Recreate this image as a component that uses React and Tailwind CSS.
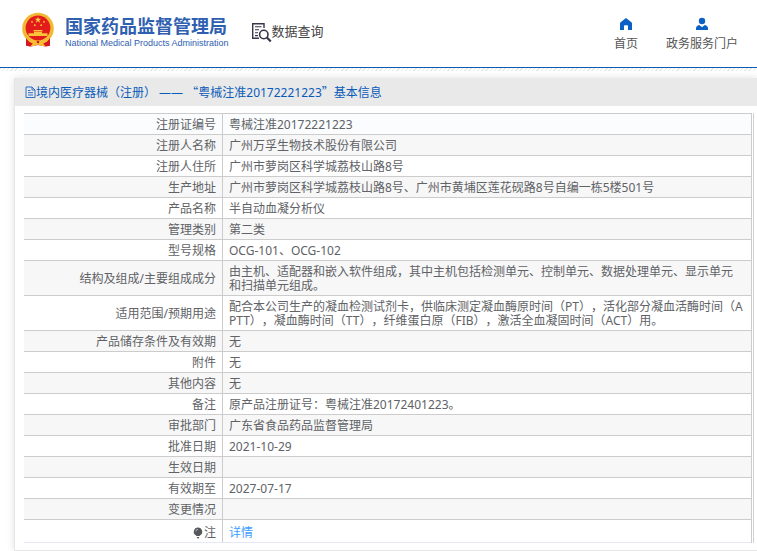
import React from "react";

const rows = [
  ["注册证编号", "粤械注准20172221223"],
  ["注册人名称", "广州万孚生物技术股份有限公司"],
  ["注册人住所", "广州市萝岗区科学城荔枝山路8号"],
  ["生产地址", "广州市萝岗区科学城荔枝山路8号、广州市黄埔区莲花砚路8号自编一栋5楼501号"],
  ["产品名称", "半自动血凝分析仪"],
  ["管理类别", "第二类"],
  ["型号规格", "OCG-101、OCG-102"],
  ["结构及组成/主要组成成分", "由主机、适配器和嵌入软件组成，其中主机包括检测单元、控制单元、数据处理单元、显示单元和扫描单元组成。"],
  ["适用范围/预期用途", "配合本公司生产的凝血检测试剂卡，供临床测定凝血酶原时间（PT），活化部分凝血活酶时间（APTT），凝血酶时间（TT），纤维蛋白原（FIB），激活全血凝固时间（ACT）用。"],
  ["产品储存条件及有效期", "无"],
  ["附件", "无"],
  ["其他内容", "无"],
  ["备注", "原产品注册证号：粤械注准20172401223。"],
  ["审批部门", "广东省食品药品监督管理局"],
  ["批准日期", "2021-10-29"],
  ["生效日期", ""],
  ["有效期至", "2027-07-17"],
  ["变更情况", ""],
];

function Emblem() {
  return (
    <svg viewBox="0 0 32 36" className="h-9 w-8 shrink-0" aria-hidden="true">
      <path d="M4.500 24 4 33.500 9 34.500 16 33 23 34.500 28 33.500 27.500 24Z" fill="#d9161c" />
      <circle cx="16" cy="16.500" r="15.800" fill="#f4bd35" />
      <circle cx="16" cy="16.500" r="14.400" fill="none" stroke="#e8a82a" strokeWidth="0.700" strokeDasharray="1.500 1" />
      <circle cx="16" cy="16" r="12.400" fill="#e21b1b" />
      <path d="m16 4.500.8 2.300h2.500l-2 1.500.8 2.400-2.100-1.500-2.100 1.500.8-2.400-2-1.500h2.500z" fill="#f8cf3e" />
      <g fill="#f8cf3e">
        <circle cx="10" cy="9.800" r="0.900" />
        <circle cx="22" cy="9.800" r="0.900" />
        <circle cx="12.800" cy="13.200" r="0.900" />
        <circle cx="19.200" cy="13.200" r="0.900" />
      </g>
      <path d="M12 18h8l1 1.300h-10zM12 19.800h8v1.500h5.500V24h-19v-2.700H12z" fill="#f8c53a" />
      <path d="M5 25.500c2 2.500 4.500 2.500 7 3.500l1 1.500a3.200 3.200 0 0 1 6 0L20 29c2.500-1 5-1 7-3.500V28c-2 1.800-4.200 2-6 3.500l2.500 2.500H20l-4-1.500-4 1.500H8.500l2.500-2.500C9.200 30 7 29.800 5 28z" fill="#f6bd35" />
      <path d="M4 26v7.500l4 1 2-3-3-1.500zM28 26v7.500l-4 1-2-3 3-1.500z" fill="#d9161c" />
      <circle cx="16" cy="30" r="1.300" fill="#d9161c" />
    </svg>
  );
}

function SearchDocIcon() {
  return (
    <svg viewBox="0 0 21 21" className="h-[21px] w-[21px] shrink-0" fill="none" stroke="#39364a" aria-hidden="true">
      <path d="M13 6V1.700H1.700v14.600H8" strokeWidth="1.400" />
      <path d="M4 4.800h6.500M4 7.800h4M4 10.800h3M4 13.600h3" strokeWidth="1.100" />
      <circle cx="12.800" cy="12.500" r="4.200" strokeWidth="1.600" />
      <path d="m15.900 15.600 3.900 4" strokeWidth="2.200" />
    </svg>
  );
}

function HomeIcon() {
  return (
    <svg viewBox="0 0 14 14" className="h-3.5 w-3.5" fill="#0a60c4" aria-hidden="true">
      <path d="M7 1 1.600 5.300Q1 5.800 1 6.500V13h4V9q0-.7.700-.7h2.600Q9 8.300 9 9v4h4V6.500q0-.7-.6-1.200z" />
    </svg>
  );
}

function UserIcon() {
  return (
    <svg viewBox="0 0 14 14" className="h-3.5 w-3.5" fill="#0a60c4" aria-hidden="true">
      <circle cx="7" cy="4" r="3.200" />
      <path d="M1 13v-1.500Q1 8.800 4.300 8L7 10.300 9.700 8Q13 8.800 13 11.500V13z" />
    </svg>
  );
}

function NavLink({ icon, children }) {
  return (
    <a href="#" className="flex flex-col items-center gap-1 text-[12px] leading-[18px] text-[#555]">
      {icon}
      {children}
    </a>
  );
}

// Curly quotes take a full character width in the Chinese family.
function Quote({ children }) {
  return <span className="font-['Noto_Sans_CJK_SC',sans-serif]">{children}</span>;
}

export default function App() {
  return (
    <div
      lang="zh-CN"
      className="overflow-x-hidden bg-white font-['Noto_Sans','Noto_Sans_CJK_SC',sans-serif] text-[12px] leading-[14px] text-[#606266] [text-spacing-trim:space-all]"
    >
      <header className="flex h-[67px] items-start pr-[19px] pl-[22px]">
        <a href="#" className="mt-3 flex items-start gap-[11px] text-[#2f60b0]">
          <Emblem />
          <span className="flex flex-col whitespace-nowrap pt-[3px]">
            <span className="text-[18px] leading-[22px] font-bold">国家药品监督管理局</span>
            <span className="font-['Liberation_Sans',sans-serif] text-[9px] leading-[12px]">National Medical Products Administration</span>
          </span>
        </a>
        <a href="#" className="mt-[22px] ml-[22px] flex items-start whitespace-nowrap text-[13px] leading-[18px] text-[#444]">
          <SearchDocIcon />
          数据查询
        </a>
        <nav className="mt-[17px] ml-auto flex gap-7 whitespace-nowrap">
          <NavLink icon={<HomeIcon />}>首页</NavLink>
          <NavLink icon={<UserIcon />}>政务服务门户</NavLink>
        </nav>
      </header>
      <div className="h-1 border-t border-[#0b5cb0] bg-[repeating-linear-gradient(135deg,#e8e8e8_0_1px,#fff_1px_3px)]" />

      <main className="mt-[7px] ml-3.5 border-b border-l border-[#e6e6e6] shadow-[0_0_8px_rgba(0,0,0,0.12)]">
        <h1 className="flex h-7 items-center bg-[#e9e9e9] pl-2.5 whitespace-pre text-[#0a5bb8]">
          <svg viewBox="0 0 11 12" className="h-3 w-[11px] shrink-0" fill="none" stroke="#2d70c4" aria-hidden="true">
            <path d="M1 1h6l3 3v7.500H1zM7 1v3h3M3 4.500h2.500M3 6.700h5M3 9h5" />
          </svg>
          <span>
            境内医疗器械（注册） —— <Quote>“</Quote>粤械注准20172221223<Quote>”</Quote>基本信息
          </span>
        </h1>
        <div className="mt-[7px] mr-[3px] mb-[7px] ml-[9px] border-r border-[#cfcfd8] pr-px">
          <table className="w-full table-fixed border-separate border-spacing-0 border-t border-r border-[#ccc]">
            <colgroup>
              <col className="w-[199px]" />
              <col />
            </colgroup>
            <tbody>
              {rows.map(([label, value]) => (
                <tr key={label} className="first:bg-[#fafcfe] even:bg-[#f7f7f7]">
                  <th scope="row" className="border-r border-b border-[#ccc] pt-1 pr-1.5 pb-0.5 text-right font-normal">
                    {label}
                  </th>
                  <td className="h-[21px] border-b border-[#ccc] pt-1 pr-2 pb-0.5 pl-1.5 break-all">{value}</td>
                </tr>
              ))}
              <tr>
                <th scope="row" className="border-r border-b border-r-[#ccc] border-b-[#e6e8f5] pt-1.5 pr-1.5 pb-0.5 font-normal">
                  <span className="flex items-center justify-end gap-px">
                    <svg viewBox="0 0 10 12" className="h-3 w-2.5" aria-hidden="true">
                      <path d="M5 .5a4.200 4.200 0 0 0-2.500 7.600L3.500 9h3l1-.9A4.200 4.200 0 0 0 5 .5M3.700 10h2.600l-.8 1.500h-1z" fill="#55575c" />
                      <path d="M2.800 4.500A2.300 2.300 0 0 1 5 2.300" fill="none" stroke="#ddd" strokeWidth="0.700" />
                    </svg>
                    注
                  </span>
                </th>
                <td className="border-b border-[#e6e8f5] px-1.5 pt-1.5 pb-0.5">
                  <a href="#" className="text-[#409eff]">详情</a>
                </td>
              </tr>
            </tbody>
          </table>
        </div>
      </main>
    </div>
  );
}
